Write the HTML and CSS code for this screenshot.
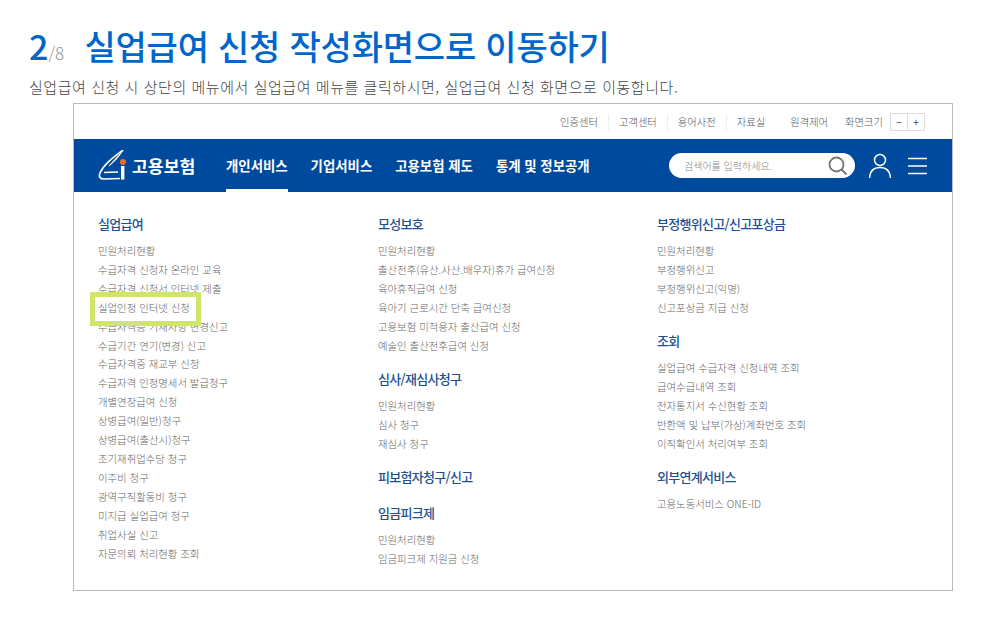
FILE: index.html
```html
<!DOCTYPE html>
<html lang="ko">
<head>
<meta charset="utf-8">
<title>실업급여 신청 작성화면으로 이동하기</title>
<link rel="stylesheet" href="styles.css">
</head>
<body>
<header class="step-head">
  <div class="step-title">
    <span class="step-no">2</span><span class="step-total">/8</span>
    <h1>실업급여 신청 작성화면으로 이동하기</h1>
  </div>
  <p class="step-desc">실업급여 신청 시 상단의 메뉴에서 실업급여 메뉴를 클릭하시면, 실업급여 신청 화면으로 이동합니다.</p>
</header>
<section class="shot">
  <div class="util">
    <a class="util-link sep">인증센터</a>
    <a class="util-link sep">고객센터</a>
    <a class="util-link sep">용어사전</a>
    <a class="util-link">자료실</a>
    <a class="util-link remote">원격제어</a>
    <span class="util-link size">화면크기</span>
    <span class="zoom-box"><span class="zoom-btn">−</span><span class="zoom-btn">+</span></span>
  </div>
  <nav class="nav">
    <div class="logo">
      <svg class="logo-mark" width="32" height="32" viewBox="0 0 32 32">
        <path d="M25 0 C16 7 6 14 2 23 C0.500 27 2 29 6 29 L22 28.500" fill="none" stroke="#fff" stroke-width="1.600"/>
        <path d="M25 0 C20 7 15 11 11 16 C16 12 21 7 25 0Z" fill="#fff" stroke="#fff" stroke-width="0.800"/>
        <path d="M6 22.500 L20 22" stroke="#fff" stroke-width="1.400"/>
        <rect x="23" y="16" width="3.400" height="13.500" fill="#fff"/>
        <circle cx="25" cy="12" r="3" fill="#f26a21"/>
      </svg>
      <span class="logo-text">고용보험</span>
    </div>
    <a class="nav-item active">개인서비스</a>
    <a class="nav-item">기업서비스</a>
    <a class="nav-item">고용보험 제도</a>
    <a class="nav-item">통계 및 정보공개</a>
    <div class="nav-right">
      <div class="search">
        <span class="search-ph">검색어를 입력하세요.</span>
        <svg width="20" height="20" viewBox="0 0 20 20"><circle cx="8.500" cy="8.500" r="7" fill="none" stroke="#777" stroke-width="1.800"/><path d="M13.500 13.500 L18.500 18.500" stroke="#777" stroke-width="2"/></svg>
      </div>
      <svg class="user" width="24" height="26" viewBox="0 0 24 26"><circle cx="12" cy="7" r="5.500" fill="none" stroke="#fff" stroke-width="1.500"/><path d="M1.500 25 C2 18 6 14.500 12 14.500 C18 14.500 22 18 22.500 25" fill="none" stroke="#fff" stroke-width="1.500"/></svg>
      <svg class="burger" width="19" height="18" viewBox="0 0 19 18"><path d="M0 1.500H19M0 9H19M0 16.500H19" stroke="#fff" stroke-width="1.300"/></svg>
    </div>
  </nav>
  <div class="menu">
    <div class="col">
      <h2>실업급여</h2>
      <ul>
        <li>민원처리현황</li>
        <li>수급자격 신청자 온라인 교육</li>
        <li>수급자격 신청서 인터넷 제출</li>
        <li class="marked">실업인정 인터넷 신청<span class="marker"></span></li>
        <li>수급자격증 기재사항 변경신고</li>
        <li>수급기간 연기(변경) 신고</li>
        <li>수급자격증 재교부 신청</li>
        <li>수급자격 인정명세서 발급청구</li>
        <li>개별연장급여 신청</li>
        <li>상병급여(일반)청구</li>
        <li>상병급여(출산시)청구</li>
        <li>조기재취업수당 청구</li>
        <li>이주비 청구</li>
        <li>광역구직활동비 청구</li>
        <li>미지급 실업급여 청구</li>
        <li>취업사실 신고</li>
        <li>자문의뢰 처리현황 조회</li>
      </ul>
    </div>
    <div class="col">
      <h2>모성보호</h2>
      <ul>
        <li>민원처리현황</li>
        <li>출산전후(유산.사산.배우자)휴가 급여신청</li>
        <li>육아휴직급여 신청</li>
        <li>육아기 근로시간 단축 급여신청</li>
        <li>고용보험 미적용자 출산급여 신청</li>
        <li>예술인 출산전후급여 신청</li>
      </ul>
      <h2>심사/재심사청구</h2>
      <ul>
        <li>민원처리현황</li>
        <li>심사 청구</li>
        <li>재심사 청구</li>
      </ul>
      <h2>피보험자청구/신고</h2>
      <h2>임금피크제</h2>
      <ul>
        <li>민원처리현황</li>
        <li>임금피크제 지원금 신청</li>
      </ul>
    </div>
    <div class="col">
      <h2>부정행위신고/신고포상금</h2>
      <ul>
        <li>민원처리현황</li>
        <li>부정행위신고</li>
        <li>부정행위신고(익명)</li>
        <li>신고포상금 지급 신청</li>
      </ul>
      <h2>조회</h2>
      <ul>
        <li>실업급여 수급자격 신청내역 조회</li>
        <li>급여수급내역 조회</li>
        <li>전자통지서 수신현황 조회</li>
        <li>반환액 및 납부(가상)계좌번호 조회</li>
        <li>이직확인서 처리여부 조회</li>
      </ul>
      <h2>외부연계서비스</h2>
      <ul>
        <li>고용노동서비스 ONE-ID</li>
      </ul>
    </div>
  </div>
</section>
</body>
</html>
```
FILE: styles.css
```css
* { box-sizing: border-box; }
html, body { margin: 0; padding: 0; }
body {
  background: #fff;
  font-family: "Noto Sans CJK KR", "Noto Sans", sans-serif;
  width: 982px;
  height: 618px;
  overflow: hidden;
}
h1, h2, p, ul { margin: 0; padding: 0; }
ul { list-style: none; }

.step-head { padding: 24px 0 0 29px; }
.step-title { display: flex; align-items: baseline; height: 44px; }
.step-no { color: #0066cc; font-size: 34px; font-weight: 500; line-height: 44px; }
.step-total { color: #999; font-size: 17px; font-weight: 300; width: 36px; }
.step-title h1 { color: #0066cc; font-size: 34px; font-weight: 500; line-height: 44px; letter-spacing: -0.2px; white-space: nowrap; }
.step-desc { color: #444; font-size: 15px; font-weight: 300; line-height: 20px; margin-top: 9px; white-space: nowrap; letter-spacing: 0.550px; }

.shot { margin: 6px 0 0 73px; width: 880px; height: 488px; border: 1px solid #bbb; }

.util { display: flex; justify-content: flex-end; align-items: center; height: 35px; padding-right: 27px; }
.util-link { color: #555; font-size: 10.300px; font-weight: 300; line-height: 16px; margin-left: 21px; white-space: nowrap; }
.util-link.sep { position: relative; }
.util-link.sep::after { content: ""; position: absolute; right: -11px; top: 0; width: 1px; height: 16px; background: #eee; }
.util-link.remote { margin-left: 25px; }
.util-link.size { margin-left: 17px; }
.zoom-box { display: flex; margin-left: 7px; border: 1px solid #ddd; height: 18px; width: 35px; }
.zoom-btn { flex: 1; text-align: center; font-size: 10px; line-height: 15px; color: #444; }
.zoom-btn + .zoom-btn { border-left: 1px solid #ddd; }

.nav { display: flex; align-items: center; height: 53px; background: #004a9e; padding-left: 24px; color: #fff; }
.logo { display: flex; align-items: center; width: 128px; }
.logo-mark { flex: none; }
.logo-text { font-size: 17.200px; font-weight: 700; margin-left: 2px; white-space: nowrap; }
.nav-item { position: relative; color: #fff; font-size: 13.400px; font-weight: 700; line-height: 53px; margin-right: 23px; white-space: nowrap; }
.nav-item.active::after { content: ""; position: absolute; left: 0; right: 0; bottom: 0; height: 3px; background: #fff; }
.nav-right { display: flex; align-items: center; margin-left: auto; padding-right: 25px; }
.search { display: flex; align-items: center; justify-content: space-between; width: 186px; height: 25px; background: #fff; border-radius: 13px; padding: 0 0 0 15px; }
.search svg { margin-right: 7px; }
.search-ph { color: #888; font-size: 10px; font-weight: 300; }
.user { margin-left: 12.500px; }
.burger { margin-left: 16.500px; }

.menu { display: grid; grid-template-columns: 280px 279px 1fr; padding: 22px 0 0 24px; }
.col h2 { color: #1d4f91; font-size: 13px; font-weight: 500; line-height: 19px; letter-spacing: -0.700px; white-space: nowrap; }
.col h2 + h2 { margin-top: 16.500px; }
.col ul { padding: 9px 0 6px; margin-bottom: 7.500px; }
.col li { position: relative; color: #666; font-size: 10.400px; font-weight: 300; line-height: 18.900px; white-space: nowrap; }
.marker { position: absolute; left: -8px; top: -6.500px; width: 111px; height: 34px; border: 5px solid #d0e56c; }
.marked { z-index: 1; }
```
